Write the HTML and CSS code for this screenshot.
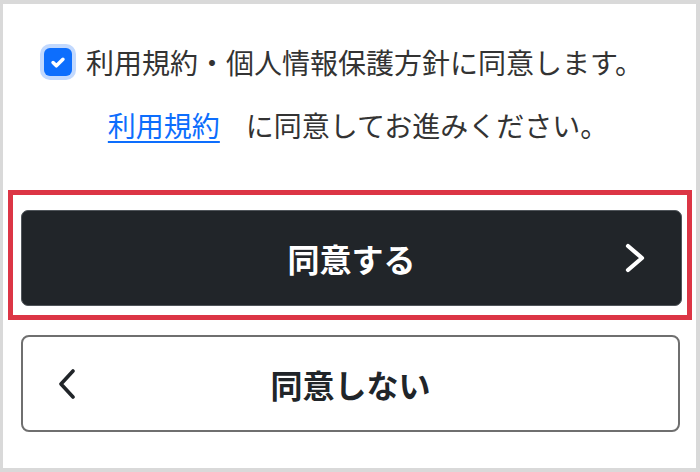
FILE: index.html
```html
<!DOCTYPE html>
<html lang="ja">
<head>
  <meta charset="UTF-8">
  <title>同意確認</title>
  <link rel="stylesheet" href="styles.css">
</head>
<body>
  <div class="panel">
    <label class="agree-row">
      <span class="checkbox">
        <svg viewBox="0 0 20 20" width="22" height="22">
          <path d="M5.5 10.5l3 3 6-6" fill="none" stroke="#fff" stroke-width="3.2" stroke-linecap="round" stroke-linejoin="round"/>
        </svg>
      </span>
      <span>利用規約・個人情報保護方針に同意します。</span>
    </label>
    <p class="note-row">
      <a href="#" class="terms-link">利用規約</a>
      <span>に同意してお進みください。</span>
    </p>
    <div class="highlight">
      <button type="button" class="btn btn-dark">
        <span></span>
        <span class="btn-label">同意する</span>
        <svg class="chevron chevron-right" viewBox="0 0 20 30" width="20" height="30">
          <polyline points="3,3 17,15 3,27" fill="none" stroke="#fff" stroke-width="4.2" stroke-linecap="round" stroke-linejoin="round"/>
        </svg>
      </button>
    </div>
    <div class="secondary">
      <button type="button" class="btn btn-outline">
        <svg class="chevron chevron-left" viewBox="0 0 16 30" width="16" height="30">
          <polyline points="14,2 2,15 14,28" fill="none" stroke="#212529" stroke-width="3.6" stroke-linecap="round" stroke-linejoin="round"/>
        </svg>
        <span class="btn-label">同意しない</span>
        <span></span>
      </button>
    </div>
  </div>
</body>
</html>
```

FILE: styles.css
```css
body {
  margin: 0;
  background-color: #d9d9d9;
  font-family: "Noto Sans CJK JP", "Noto Sans", sans-serif;
  color: #333;
}
.panel {
  margin: 4px 4px 4px 3px;
  height: 464px;
  box-sizing: border-box;
  background: #fff;
  padding-top: 38px;
}
.agree-row {
  display: flex;
  align-items: center;
  justify-content: center;
  height: 40px;
  font-size: 28px;
  line-height: 40px;
  padding-right: 12px;
}
.checkbox {
  display: flex;
  align-items: center;
  justify-content: center;
  width: 28px;
  height: 28px;
  margin-right: 14px;
  background-color: #0d6efd;
  border-radius: 6px;
  box-shadow: 0 0 0 4px #c2d9fe;
}
.checkbox svg {
  width: 22px;
  height: 22px;
}
.note-row {
  display: flex;
  align-items: center;
  justify-content: center;
  gap: 26px;
  margin: 23px 0 0;
  height: 40px;
  font-size: 28px;
  line-height: 40px;
  padding-left: 17px;
}
.terms-link {
  color: #0d6efd;
  text-decoration: underline;
  text-underline-offset: 4px;
  text-decoration-thickness: 2px;
}
.highlight {
  margin: 45px 4px 0 5px;
  border: 5px solid #dc3545;
  padding: 15px 5px 9px 8px;
}
.secondary {
  padding: 15px 16px 0 18px;
}
.btn {
  display: grid;
  grid-template-columns: 1fr auto 1fr;
  align-items: center;
  width: 100%;
  height: 96px;
  padding: 0 36px;
  box-sizing: border-box;
  font-family: inherit;
  font-size: 32px;
  font-weight: bold;
  cursor: pointer;
}
.btn-dark {
  background-color: #212529;
  color: #fff;
  border: 1px solid #50555a;
  border-radius: 7px;
}
.btn-outline {
  height: 97px;
  background-color: #fff;
  color: #212529;
  border: 2px solid #6f6f6f;
  border-radius: 8px;
}
.btn-label {
  line-height: 40px;
}
.chevron-right {
  justify-self: end;
}
.chevron-left {
  justify-self: start;
}
```
